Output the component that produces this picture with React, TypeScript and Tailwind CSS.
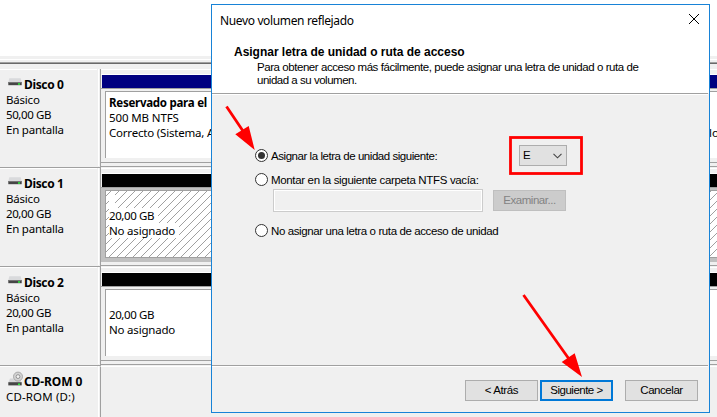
import type { ReactNode } from 'react';

const UI = "font-['Noto_Sans','Open_Sans',sans-serif]";
const DLG = "font-['Liberation_Sans',Arial,sans-serif]";

function DriveIcon() {
  return (
    <svg width="16" height="16" viewBox="0 0 16 16" className="shrink-0">
      <path d="M3.300 2.300h11.400l1 4H2.300z" fill="#d9dadc" />
      <path d="M2.300 6h13.400v3.200H2.300z" fill="#464646" />
      <path d="M2.300 6h13.400v.8H2.300z" fill="#808080" />
      <path d="M12 7.200h2v1.500h-2z" fill="#2cf03c" />
    </svg>
  );
}

function CdIcon() {
  return (
    <svg width="16" height="16" viewBox="0 0 16 16" className="shrink-0 overflow-visible">
      <path d="M4 5.500h10l1.500 4H2.300z" fill="#d5d6d8" />
      <circle cx="12" cy="3.600" r="4.500" fill="#d2d2d2" stroke="#9c9c9c" strokeWidth="0.8" />
      <circle cx="12" cy="3.600" r="1.900" fill="#f4f4f4" stroke="#8c8c8c" strokeWidth="0.9" />
      <path d="M2.300 9.200h13.400v3.200H2.300z" fill="#464646" />
      <path d="M12 10.400h2v1.500h-2z" fill="#2cf03c" />
    </svg>
  );
}

function Hatch() {
  return (
    <svg className="absolute inset-0 h-full w-full" shapeRendering="crispEdges">
      <defs>
        <pattern id="hatch" width="8" height="8" patternUnits="userSpaceOnUse">
          {[0, 1, 2, 3, 4, 5, 6, 7].map((i) => (
            <rect key={i} x={i} y={(12 - i) % 8} width="1" height="1" fill="#a0a0a0" />
          ))}
        </pattern>
      </defs>
      <rect width="100%" height="100%" fill="url(#hatch)" />
    </svg>
  );
}

function DiskRow({ name, size, bar, selected, children }: { name: string; size: string; bar: string; selected?: boolean; children: ReactNode }) {
  return (
    <div className="flex h-[99px]">
      <div className="flex w-[97px] shrink-0 flex-col border-b border-t border-b-[#a0a0a0] border-t-white pl-1.5 pt-[6px] text-[11.5px] leading-[15px]">
        <div className="flex h-4 items-center gap-[2px]">
          <DriveIcon />
          <span className="whitespace-nowrap text-[12px] font-bold tracking-[-0.35px]">{name}</span>
        </div>
        <span className="tracking-[-0.2px]">Básico</span>
        <span className="tracking-[-0.4px]">{size}</span>
        <span className="tracking-[-0.22px]">En pantalla</span>
      </div>
      <div className="w-[3px] shrink-0 border-b border-[#a0a0a0] pb-px"><div className="ml-px h-full w-px bg-white" /></div>
      <div className="flex grow flex-col border-l border-[#a0a0a0]">
        <div className="h-px bg-white" />
        <div className="h-[5px] border-b border-white" />
        <div className="flex h-[13px] pl-px"><div className={`grow ${bar}`} /></div>
        <div className={`flex h-[75px] flex-col border-t border-[#a0a0a0] pl-1 ${selected ? 'bg-[#c0c0c0] pb-[4px]' : 'border-b pb-1'}`}>
          <div className="h-[2px]" />
          <div className={`relative flex grow justify-between border-l border-t border-[#a0a0a0] bg-white ${selected ? 'border-b' : ''}`}>
            {children}
          </div>
        </div>
        <div className="h-[4px] border-b border-[#a0a0a0]" />
      </div>
    </div>
  );
}

function Radio({ label, spacing, checked = false }: { label: string; spacing: string; checked?: boolean }) {
  return (
    <label className="flex h-[15px] items-center gap-[3px] whitespace-nowrap">
      <span className="flex h-[13px] w-[13px] items-center justify-center rounded-full border border-[#333] bg-white">
        {checked && <span className="h-[7px] w-[7px] rounded-full bg-[#333]" />}
      </span>
      <span className={`pt-px ${spacing}`}>{label}</span>
    </label>
  );
}

function Button({ label, look, spacing }: { label: string; look: string; spacing: string }) {
  return (
    <button className={`flex h-[21px] w-[73px] items-center justify-center whitespace-nowrap ${look} ${spacing}`}>{label}</button>
  );
}

export default function App() {
  return (
    <div className={`relative h-[417px] w-[717px] overflow-hidden bg-[#f0f0f0] text-black ${UI}`}>
      <div className="h-[56px] bg-white" />
      <div className="h-[4px] border-b border-white" />
      <div className="h-[3px] border-b border-[#a0a0a0]" />
      <div className="h-px bg-[#696969]" />
      <div className="h-[5px]" />
      <DiskRow name="Disco 0" size="50,00 GB" bar="bg-[#000080]">
        <div className="flex flex-col whitespace-nowrap pl-[3px] pt-[3px] text-[11.5px] leading-[15px]">
          <b className="tracking-[-0.26px]">Reservado para el</b>
          <span className="tracking-[-0.12px]">500 MB NTFS</span>
          <span className="tracking-[-0.2px]">Correcto (Sistema, Activo)</span>
        </div>
        <div className="w-[8px] pt-[33px] text-[11.5px] leading-[15px]">lo</div>
      </DiskRow>
      <DiskRow name="Disco 1" size="20,00 GB" bar="bg-black" selected>
        <Hatch />
        <div className="relative flex flex-col items-start pl-[3px] pt-[2px] text-[11.5px] leading-[15px]">
          <div className="h-[15px] w-[6px] bg-white" />
          <span className="bg-white pr-1 tracking-[-0.4px]">20,00 GB</span>
          <span className="bg-white pr-1 tracking-[-0.2px]">No asignado</span>
        </div>
      </DiskRow>
      <DiskRow name="Disco 2" size="20,00 GB" bar="bg-black">
        <div className="flex flex-col items-start pl-[3px] pt-[17px] text-[11.5px] leading-[15px]">
          <span className="tracking-[-0.4px]">20,00 GB</span>
          <span className="tracking-[-0.2px]">No asignado</span>
        </div>
      </DiskRow>
      <div className="flex h-[51px]">
        <div className="w-[97px] border-t border-white pl-1.5 pt-[6px] text-[11.5px] leading-[15px]">
          <div className="flex h-[16px] items-center gap-[2px]">
            <CdIcon />
            <span className="whitespace-nowrap text-[12px] font-bold tracking-[-0.1px]">CD-ROM 0</span>
          </div>
          <span className="tracking-[0.15px]">CD-ROM (D:)</span>
        </div>
        <div className="w-[3px] px-px"><div className="h-full w-px bg-white" /></div>
        <div className="grow border-l border-t border-l-[#a0a0a0] border-t-white" />
      </div>

      <div className={`absolute left-[211px] top-[4px] flex h-[409px] w-[499px] flex-col border border-[#1883d7] bg-[#f0f0f0] text-[11.5px] leading-[13px] ${DLG}`}>
        <header className="h-[88px] bg-white">
          <div className={`flex h-[30px] items-center justify-between pl-2 pr-[9px] text-[12px] tracking-[-0.36px] ${UI}`}>
            <span>Nuevo volumen reflejado</span>
            <svg width="12" height="12" viewBox="0 0 12 12" className="mb-0.5"><path d="M1 1l10 10M11 1L1 11" stroke="#000" strokeWidth="1" /></svg>
          </div>
          <h1 className="whitespace-nowrap pl-[22px] pt-[11px] text-[12px] font-bold tracking-[-0.02px]">Asignar letra de unidad o ruta de acceso</h1>
          <p className="whitespace-nowrap pl-[45px] pt-[2px]">
            <span className="block tracking-[-0.44px]">Para obtener acceso más fácilmente, puede asignar una letra de unidad o ruta de</span>
            <span className="block tracking-[-0.48px]">unidad a su volumen.</span>
          </p>
        </header>
        <div className="mr-px h-[2px] border-b border-white bg-[#a0a0a0]" />
        <main className="h-[270px] pl-[43px] pt-[53px]">
          <div className="flex h-[15px] items-center">
            <div className="w-[264px]"><Radio checked label="Asignar la letra de unidad siguiente:" spacing="tracking-[-0.45px]" /></div>
            <div className="flex h-[21px] w-[48px] items-center justify-between border border-[#adadad] bg-[#e1e1e1] pl-[3px] pr-[4px]">
              <span>E</span>
              <svg width="9" height="6" viewBox="0 0 9 6"><path d="M.5 .8l4 4 4-4" fill="none" stroke="#444" strokeWidth="1.100" /></svg>
            </div>
          </div>
          <div className="mt-[9px]"><Radio label="Montar en la siguiente carpeta NTFS vacía:" spacing="tracking-[-0.34px]" /></div>
          <div className="mt-[2px] flex h-[23px] items-center gap-[10px] pl-[18px]">
            <div className="h-[23px] w-[210px] border border-[#ccc] bg-white p-px"><div className="h-full bg-[#f0f0f0]" /></div>
            <Button label="Examinar..." look="border border-[#bfbfbf] bg-[#ccc] text-[#838383]" spacing="tracking-[-0.45px]" />
          </div>
          <div className="mt-[11px]"><Radio label="No asignar una letra o ruta de acceso de unidad" spacing="tracking-[-0.39px]" /></div>
        </main>
        <div className="mr-px h-[2px] border-b border-white bg-[#a0a0a0]" />
        <footer className="flex pl-[253px] pt-[13px]">
          <Button label="< Atrás" look="border border-[#adadad] bg-[#e1e1e1]" spacing="tracking-[-0.4px]" />
          <div className="ml-[2px]"><Button label="Siguiente >" look="border-2 border-[#0078d7] bg-[#e1e1e1]" spacing="tracking-[-0.5px]" /></div>
          <div className="ml-[12px]"><Button label="Cancelar" look="border border-[#adadad] bg-[#e1e1e1]" spacing="tracking-[-0.45px]" /></div>
        </footer>
      </div>

      <svg className="pointer-events-none absolute inset-0" width="717" height="417" viewBox="0 0 717 417" fill="none">
        <rect x="510.500" y="137.500" width="71" height="36" stroke="#f00" strokeWidth="2.800" />
        <path d="M226.500 106.500L243 131M523.500 295L569 359" stroke="#f00" strokeWidth="2.800" />
        <path d="M254.700 150L235.300 134.300L248.700 126zM582 377L561.700 362L574.700 353.300z" fill="#f00" />
      </svg>
    </div>
  );
}
